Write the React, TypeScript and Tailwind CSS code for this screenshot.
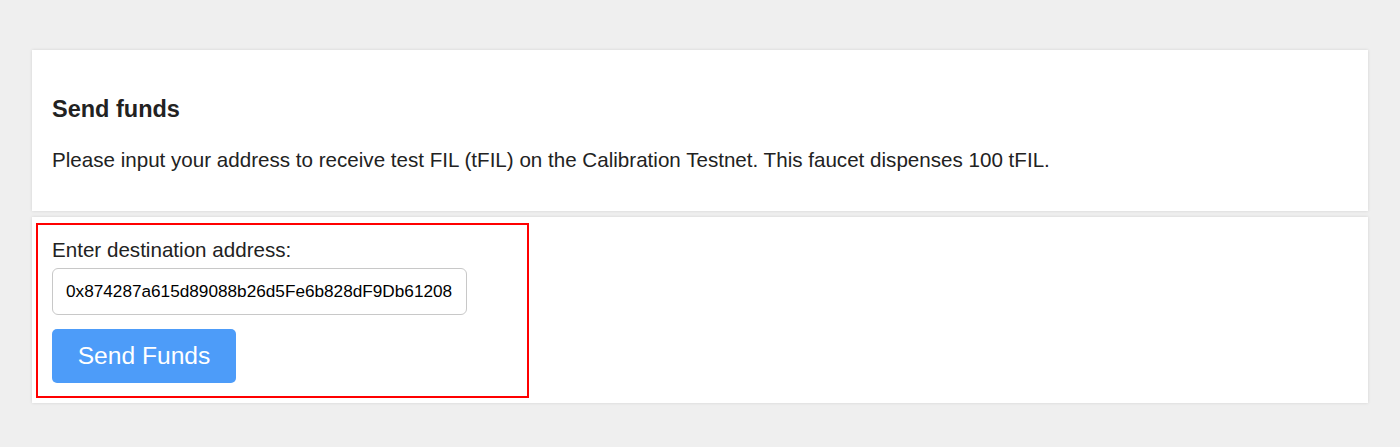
export default function App() {
  return (
    <div className="min-h-[447px] bg-[#efefef] px-8 pt-[50px] font-['Liberation_Sans',Arial,sans-serif] text-[#222]">
      <div className="flex flex-col gap-[6px]">
        <section className="h-[161px] bg-white px-5 pt-[45px] shadow-[0_0_3px_rgba(0,0,0,0.12)]">
          <h2 className="text-[23.5px] font-bold leading-7">Send funds</h2>
          <p className="mt-[25px] text-[20.6px] leading-6">
            Please input your address to receive test FIL (tFIL) on the Calibration Testnet. This faucet dispenses 100 tFIL.
          </p>
        </section>
        <section className="h-[186px] bg-white pl-1 pt-[6px] shadow-[0_0_3px_rgba(0,0,0,0.12)]">
          <div className="w-[493px] border-2 border-[#f00] px-[14px] pb-[13px] pt-[13px]">
            <label className="block text-[20.6px] leading-6">Enter destination address:</label>
            <input
              readOnly
              value="0x874287a615d89088b26d5Fe6b828dF9Db61208"
              className="mt-[6px] h-[47px] w-[415px] rounded-[6px] border border-[#c8c8c8] px-[13px] text-[17.2px] text-black outline-none"
            />
            <button className="mt-[14px] flex h-[54px] w-[184px] items-center justify-center rounded-[5px] bg-[#4d9cf9] text-[24.6px] text-white">
              Send Funds
            </button>
          </div>
        </section>
      </div>
    </div>
  );
}
